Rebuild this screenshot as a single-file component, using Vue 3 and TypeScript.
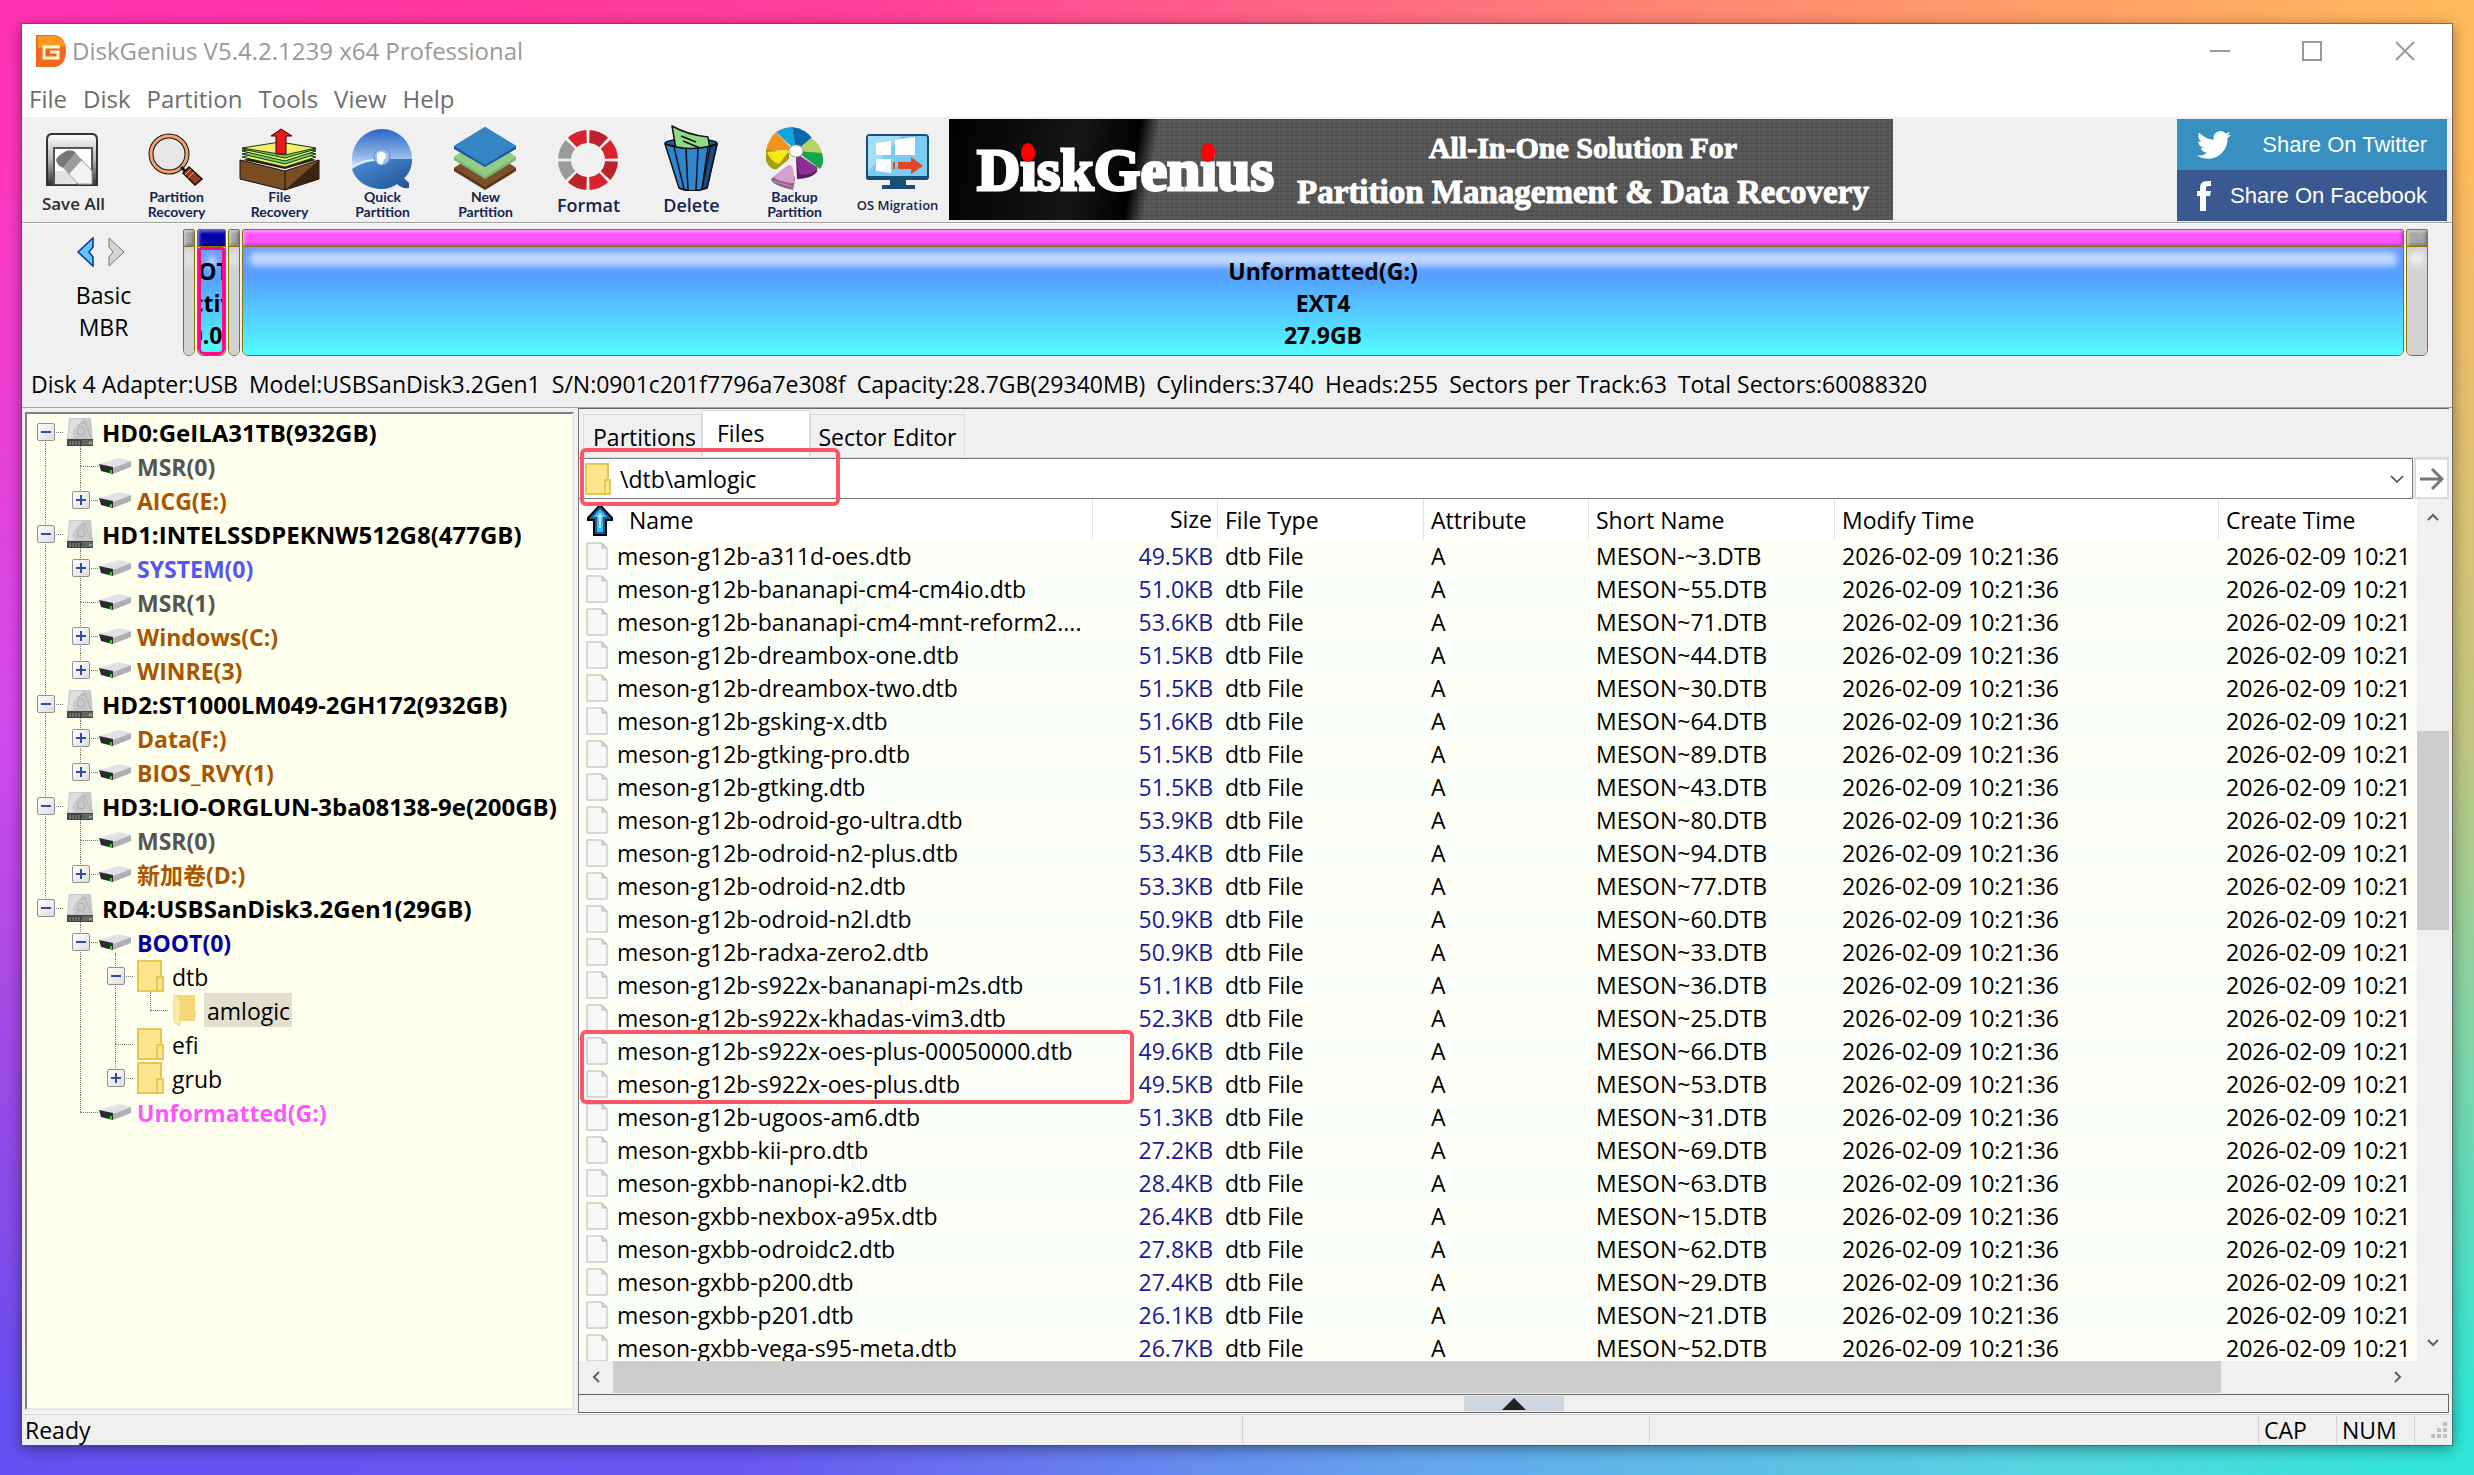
<script setup lang="ts">
import { ref } from 'vue'

type TreeRow = {
  label: string
  kind: 'disk' | 'volume' | 'folder' | 'open'
  tone: string
  /** one entry per guide column: u = line up, d = line down, a = line across, + / - = expander */
  guides: string[]
}

const menus = ['File', 'Disk', 'Partition', 'Tools', 'View', 'Help']

const info = [
  'Disk 4 Adapter:USB',
  'Model:USBSanDisk3.2Gen1',
  'S/N:0901c201f7796a7e308f',
  'Capacity:28.7GB(29340MB)',
  'Cylinders:3740',
  'Heads:255',
  'Sectors per Track:63',
  'Total Sectors:60088320',
]

const tree: TreeRow[] = [
  { label: 'HD0:GeILA31TB(932GB)', kind: 'disk', tone: 'black', guides: ['da-'] },
  { label: 'MSR(0)', kind: 'volume', tone: 'gray', guides: ['ud', 'uda'] },
  { label: 'AICG(E:)', kind: 'volume', tone: 'brown', guides: ['ud', 'ua+'] },
  { label: 'HD1:INTELSSDPEKNW512G8(477GB)', kind: 'disk', tone: 'black', guides: ['uda-'] },
  { label: 'SYSTEM(0)', kind: 'volume', tone: 'blue', guides: ['ud', 'uda+'] },
  { label: 'MSR(1)', kind: 'volume', tone: 'gray', guides: ['ud', 'uda'] },
  { label: 'Windows(C:)', kind: 'volume', tone: 'brown', guides: ['ud', 'uda+'] },
  { label: 'WINRE(3)', kind: 'volume', tone: 'brown', guides: ['ud', 'ua+'] },
  { label: 'HD2:ST1000LM049-2GH172(932GB)', kind: 'disk', tone: 'black', guides: ['uda-'] },
  { label: 'Data(F:)', kind: 'volume', tone: 'brown', guides: ['ud', 'uda+'] },
  { label: 'BIOS_RVY(1)', kind: 'volume', tone: 'brown', guides: ['ud', 'ua+'] },
  { label: 'HD3:LIO-ORGLUN-3ba08138-9e(200GB)', kind: 'disk', tone: 'black', guides: ['uda-'] },
  { label: 'MSR(0)', kind: 'volume', tone: 'gray', guides: ['ud', 'uda'] },
  { label: '新加卷(D:)', kind: 'volume', tone: 'brown', guides: ['ud', 'ua+'] },
  { label: 'RD4:USBSanDisk3.2Gen1(29GB)', kind: 'disk', tone: 'black', guides: ['ua-'] },
  { label: 'BOOT(0)', kind: 'volume', tone: 'navy', guides: ['', 'uda-'] },
  { label: 'dtb', kind: 'folder', tone: 'plain', guides: ['', 'ud', 'uda-'] },
  { label: 'amlogic', kind: 'open', tone: 'plain selected', guides: ['', 'ud', 'ud', 'ua'] },
  { label: 'efi', kind: 'folder', tone: 'plain', guides: ['', 'ud', 'uda'] },
  { label: 'grub', kind: 'folder', tone: 'plain', guides: ['', 'ud', 'ua+'] },
  { label: 'Unformatted(G:)', kind: 'volume', tone: 'pink', guides: ['', 'ua'] },
]

const files: [string, string, string][] = [
  ['meson-g12b-a311d-oes.dtb', '49.5KB', 'MESON-~3.DTB'],
  ['meson-g12b-bananapi-cm4-cm4io.dtb', '51.0KB', 'MESON~55.DTB'],
  ['meson-g12b-bananapi-cm4-mnt-reform2....', '53.6KB', 'MESON~71.DTB'],
  ['meson-g12b-dreambox-one.dtb', '51.5KB', 'MESON~44.DTB'],
  ['meson-g12b-dreambox-two.dtb', '51.5KB', 'MESON~30.DTB'],
  ['meson-g12b-gsking-x.dtb', '51.6KB', 'MESON~64.DTB'],
  ['meson-g12b-gtking-pro.dtb', '51.5KB', 'MESON~89.DTB'],
  ['meson-g12b-gtking.dtb', '51.5KB', 'MESON~43.DTB'],
  ['meson-g12b-odroid-go-ultra.dtb', '53.9KB', 'MESON~80.DTB'],
  ['meson-g12b-odroid-n2-plus.dtb', '53.4KB', 'MESON~94.DTB'],
  ['meson-g12b-odroid-n2.dtb', '53.3KB', 'MESON~77.DTB'],
  ['meson-g12b-odroid-n2l.dtb', '50.9KB', 'MESON~60.DTB'],
  ['meson-g12b-radxa-zero2.dtb', '50.9KB', 'MESON~33.DTB'],
  ['meson-g12b-s922x-bananapi-m2s.dtb', '51.1KB', 'MESON~36.DTB'],
  ['meson-g12b-s922x-khadas-vim3.dtb', '52.3KB', 'MESON~25.DTB'],
  ['meson-g12b-s922x-oes-plus-00050000.dtb', '49.6KB', 'MESON~66.DTB'],
  ['meson-g12b-s922x-oes-plus.dtb', '49.5KB', 'MESON~53.DTB'],
  ['meson-g12b-ugoos-am6.dtb', '51.3KB', 'MESON~31.DTB'],
  ['meson-gxbb-kii-pro.dtb', '27.2KB', 'MESON~69.DTB'],
  ['meson-gxbb-nanopi-k2.dtb', '28.4KB', 'MESON~63.DTB'],
  ['meson-gxbb-nexbox-a95x.dtb', '26.4KB', 'MESON~15.DTB'],
  ['meson-gxbb-odroidc2.dtb', '27.8KB', 'MESON~62.DTB'],
  ['meson-gxbb-p200.dtb', '27.4KB', 'MESON~29.DTB'],
  ['meson-gxbb-p201.dtb', '26.1KB', 'MESON~21.DTB'],
  ['meson-gxbb-vega-s95-meta.dtb', '26.7KB', 'MESON~52.DTB'],
]

const path = ref('\\dtb\\amlogic')

/** Ring segments of the Format icon, in degrees clockwise from the top. */
const ring = [0, 1, 2, 3, 4, 5, 6, 7].map((i) => {
  const point = (r: number, deg: number) => {
    const a = (deg * Math.PI) / 180
    return `${(51 + r * Math.sin(a)).toFixed(1)} ${(41 - r * Math.cos(a)).toFixed(1)}`
  }
  const from = i * 45 + 3
  const to = i * 45 + 42
  return {
    fill: i === 5 || i === 6 ? '#9b9b9b' : i % 2 ? '#d9202d' : '#bb2229',
    d: `M${point(30, from)}A30 30 0 0 1 ${point(30, to)}L${point(17, to - 1)}A17 17 0 0 0 ${point(17, from + 1)}Z`,
  }
})
</script>

<template>
  <div class="desktop">
    <main class="window">
      <header class="titlebar">
        <svg class="logo" viewBox="0 0 30 32" aria-hidden="true">
          <path d="M0 0H17C26 0 30 7 30 16S26 32 17 32H0Z" fill="#f4671f" />
          <path d="M2 1H17C24 1 28 5 29 11L2 13Z" fill="#fa9a1e" />
          <path d="M24 12H8V23H22V17H14" fill="none" stroke="#fff6cf" stroke-width="3" />
        </svg>
        <h1>DiskGenius V5.4.2.1239 x64 Professional</h1>
        <div class="controls">
          <button type="button" aria-label="Minimize"><svg viewBox="0 0 20 20"><path d="M0 10H20" /></svg></button>
          <button type="button" aria-label="Maximize"><svg viewBox="0 0 20 20"><path d="M1 1H19V19H1Z" /></svg></button>
          <button type="button" aria-label="Close"><svg viewBox="0 0 20 20"><path d="M1 1L19 19M19 1L1 19" /></svg></button>
        </div>
      </header>

      <nav class="menu">
        <button v-for="m in menus" :key="m" type="button">{{ m }}</button>
      </nav>

      <section class="toolbar">
        <button type="button" class="tool tool-save">
          <svg viewBox="0 0 103 72" aria-hidden="true">
            <defs>
              <linearGradient id="save" x1="0" y1="0" x2="0" y2="1">
                <stop offset="0" stop-color="#fff" /><stop offset=".5" stop-color="#b5b5b5" /><stop offset="1" stop-color="#333" />
              </linearGradient>
            </defs>
            <path d="M30 15H70Q75 15 75 21V66H25V21Q25 15 30 15Z" fill="url(#save)" stroke="#333" stroke-width="2" />
            <rect x="32" y="29" width="38" height="36" fill="#fff" stroke="#555" stroke-width="2" />
            <path d="M33 52L44 52L55 65H33Z" fill="#e2e2e2" />
            <path d="M46 54L59 40L70 52V65H56Z" fill="#f3f3f3" stroke="#999" />
            <path d="M34 41Q34 38 44 32Q51 30 54 34L41 49Q35 46 34 41Z" fill="#777" />
            <path d="M41 49L54 34L60 41L47 55Z" fill="#9c9c9c" />
          </svg>
          <span>Save All</span>
        </button>
        <button type="button" class="tool tool-two">
          <svg viewBox="0 0 103 72" aria-hidden="true">
            <circle cx="44" cy="35" r="18" fill="#e6e6e6" stroke="#111" stroke-width="5" />
            <circle cx="44" cy="35" r="18" fill="none" stroke="#f4a070" stroke-width="3" />
            <path d="M56 48L60 52" stroke="#111" stroke-width="3" />
            <path d="M58 54L64 48L77 60L70 66Z" fill="#963c22" stroke="#111" stroke-width="1.5" />
            <path d="M60 56L66 50M63 59L69 53" stroke="#f09a6a" />
          </svg>
          <span>Partition<br />Recovery</span>
        </button>
        <button type="button" class="tool tool-two">
          <svg viewBox="0 0 103 72" aria-hidden="true">
            <path d="M12 41L57 52L91 41V60L57 71L12 60Z" fill="#7a4d24" stroke="#111" />
            <path d="M91 41V60L57 71Z" fill="#3a2412" />
            <path d="M57 52V71" stroke="#111" />
            <path d="M15 41L52 31L88 41L57 50Z" fill="#2c1a0c" />
            <g stroke="#1c3a10">
              <path d="M14 38L52 29L88 38L57 48Z" fill="#f2ee6b" />
              <path d="M14 35L52 27L88 35L57 45Z" fill="#6fd36b" />
              <path d="M14 32L52 25L88 32L57 42Z" fill="#f2ee6b" />
              <path d="M14 30L52 24L88 30L57 39Z" fill="#6fd36b" />
              <path d="M14 29L52 23L88 29L57 36Z" fill="#f2ee6b" />
            </g>
            <path d="M53 10L64 17H58V35H48V17H43Z" fill="#e51a1a" stroke="#400" />
          </svg>
          <span>File<br />Recovery</span>
        </button>
        <button type="button" class="tool tool-two">
          <svg viewBox="0 0 103 72" aria-hidden="true">
            <defs>
              <linearGradient id="disc" x1="0" y1="0" x2="0" y2="1">
                <stop offset="0" stop-color="#2b66c4" /><stop offset=".45" stop-color="#8fb6e8" /><stop offset=".62" stop-color="#cfe2f8" />
              </linearGradient>
              <linearGradient id="disclow" x1="0" y1="0" x2="1" y2="1">
                <stop offset="0" stop-color="#4a90dc" /><stop offset="1" stop-color="#20528f" />
              </linearGradient>
            </defs>
            <circle cx="51" cy="40" r="30" fill="url(#disc)" />
            <path d="M21 50Q34 41 51 40H81C81 49 78 55 73 59L78 64V69Q71 70 66 65Q59 70 51 70C36 70 24 61 21 50Z" fill="url(#disclow)" />
            <path d="M21 48Q34 41 44 41" fill="none" stroke="#dcebfb" stroke-width="2" />
            <circle cx="51" cy="38" r="8" fill="#9cc0ec" stroke="#5d8fd0" />
            <path d="M46 36Q47 32 51 33Q55 33 55 39Q52 40 52 45Q47 47 46 41Z" fill="#fff" />
          </svg>
          <span>Quick<br />Partition</span>
        </button>
        <button type="button" class="tool tool-two">
          <svg viewBox="0 0 103 72" aria-hidden="true">
            <path d="M20 49L51 29L82 49V52L51 71L20 52Z" fill="#57351a" />
            <path d="M20 49L51 29L82 49L51 68Z" fill="#7a4f2a" />
            <path d="M20 38L51 18L82 38V41L51 60L20 41Z" fill="#7bb877" />
            <path d="M20 38L51 18L82 38L51 57Z" fill="#92cd86" />
            <path d="M20 27L51 8L82 27V30L51 48L20 30Z" fill="#1c56a8" />
            <path d="M20 27L51 8L82 27L51 46Z" fill="#3585c2" />
          </svg>
          <span>New<br />Partition</span>
        </button>
        <button type="button" class="tool">
          <svg viewBox="0 0 103 72" aria-hidden="true">
            <path v-for="s in ring" :key="s.d" :d="s.d" :fill="s.fill" />
          </svg>
          <span>Format</span>
        </button>
        <button type="button" class="tool">
          <svg viewBox="0 0 103 72" aria-hidden="true" stroke="#111" stroke-width="1.5" stroke-linejoin="round">
            <ellipse cx="51" cy="24" rx="26" ry="4" fill="#1c5ca8" />
            <path d="M32 7Q48 16 68 18L70 30H36Z" fill="#8edb8a" />
            <path d="M41 17L56 23M43 22L60 29" />
            <path d="M25 25Q51 34 77 25L67 69Q51 75 39 69Z" fill="#2f86cf" />
            <path d="M34 28L44 70M46 30L48 71M58 30L56 71M68 28L62 70" fill="none" />
            <path d="M70 28L77 25L67 69L62 70Z" fill="#174b88" />
          </svg>
          <span>Delete</span>
        </button>
        <button type="button" class="tool tool-two">
          <svg viewBox="0 0 103 72" aria-hidden="true">
            <path d="M53 32L33 13A29 24 0 0 1 49 8Z" fill="#12a5dc" />
            <path d="M53 32L49 8A29 25 0 0 1 69 19Z" fill="#0a67ae" />
            <path d="M53 32L68 19Q78 25 79 35Z" fill="#b5d464" />
            <path d="M53 32L79 34Q82 44 77 50Z" fill="#14a64c" />
            <path d="M53 38L74 48V53Q68 60 54 60Z" fill="#5d1a6c" />
            <path d="M53 34L75 49Q68 58 56 55Z" fill="#8b3090" />
            <path d="M23 32Q25 20 33 13L50 31Z" fill="#f0931f" />
            <path d="M23 30V42Q28 52 34 50L46 40V34Z" fill="#a39a1a" />
            <path d="M24 33L47 31L36 45Q28 43 24 33Z" fill="#f6ea0c" />
            <path d="M42 49L28 60Q28 66 50 71L52 61V58Z" fill="#93628c" />
            <path d="M44 47Q48 44 50 49L52 64Q39 64 30 58Z" fill="#d3a0cb" />
            <path d="M29 62L51 68" stroke="#c490bc" />
            <ellipse cx="53" cy="32" rx="7" ry="6" fill="#fff" stroke="#999" />
          </svg>
          <span>Backup<br />Partition</span>
        </button>
        <button type="button" class="tool tool-os">
          <svg viewBox="0 0 103 72" aria-hidden="true">
            <path d="M44 60H60V66H69V70H36V66H44Z" fill="#164f78" />
            <rect x="21" y="16" width="61" height="44" rx="3" fill="#7bccf0" stroke="#164f78" stroke-width="2" />
            <path d="M20 57H83V59Q82 61 80 61H23Q20 61 20 58Z" fill="#164f78" />
            <path d="M22 17H56L22 52Z" fill="#a3ddf6" />
            <path d="M30 24L45 22V36H30ZM49 21L69 18V36H49ZM30 40H45V54L30 52Z" fill="#fff" />
            <path d="M47 43H49V50H47ZM52 43H65V38L77 47L65 55V50H52Z" fill="#df4726" />
          </svg>
          <span>OS Migration</span>
        </button>

        <div class="banner">
          <div class="banner-logo">D<i>i</i>skGen<i>i</i>us</div>
          <div class="banner-text">
            <p class="banner-top">All-In-One Solution For</p>
            <p class="banner-bottom">Partition Management &amp; Data Recovery</p>
          </div>
        </div>

        <div class="share">
          <a href="#twitter" class="twitter">
            <svg viewBox="0 0 24 24" width="34" height="34" aria-hidden="true">
              <path fill="#fff" d="M23.953 4.57a10 10 0 01-2.825.775 4.958 4.958 0 002.163-2.723c-.951.555-2.005.959-3.127 1.184a4.92 4.92 0 00-8.384 4.482C7.69 8.095 4.067 6.13 1.64 3.162a4.822 4.822 0 00-.666 2.475c0 1.71.87 3.213 2.188 4.096a4.904 4.904 0 01-2.228-.616v.06a4.923 4.923 0 003.946 4.827 4.996 4.996 0 01-2.212.085 4.936 4.936 0 004.604 3.417 9.867 9.867 0 01-6.102 2.105c-.39 0-.779-.023-1.17-.067a13.995 13.995 0 007.557 2.209c9.053 0 13.998-7.496 13.998-13.985 0-.21 0-.42-.015-.63A9.935 9.935 0 0024 4.59z" />
            </svg>
            <span>Share On Twitter</span>
          </a>
          <a href="#facebook" class="facebook">
            <svg viewBox="0 0 14 30" width="14" height="30" aria-hidden="true">
              <path fill="#fff" d="M3 30V15H0V10H3V7Q3 0 10 0H14V5H11Q9 5 9 7V10H14L13 15H9V30Z" />
            </svg>
            <span>Share On Facebook</span>
          </a>
        </div>
      </section>

      <section class="diskmap">
        <div class="diskmap-row">
          <div class="disknav">
            <div class="arrows">
              <button type="button" aria-label="Previous disk">
                <svg viewBox="0 0 18 30"><path d="M16 1V10L12 15L16 20V29L1 15Z" fill="#62c4fb" stroke="#0a2f9a" stroke-width="1.5" /></svg>
              </button>
              <button type="button" aria-label="Next disk">
                <svg viewBox="0 0 18 30"><path d="M2 1V10L6 15L2 20V29L17 15Z" fill="#d4d4d4" stroke="#777" /></svg>
              </button>
            </div>
            <p>Basic</p>
            <p>MBR</p>
          </div>
          <div class="bars">
            <div class="bar free thin"><div class="cap"></div><div class="body"></div></div>
            <div class="bar boot">
              <div class="cap"></div>
              <div class="body"><p>BOOT(0)</p><p>Active</p><p>500.0MB</p></div>
            </div>
            <div class="bar free thin"><div class="cap"></div><div class="body"></div></div>
            <div class="bar main">
              <div class="cap"></div>
              <div class="body"><p>Unformatted(G:)</p><p>EXT4</p><p>27.9GB</p></div>
            </div>
            <div class="bar free tail"><div class="cap"></div><div class="body"></div></div>
          </div>
        </div>
        <div class="info"><span v-for="i in info" :key="i">{{ i }}</span></div>
      </section>

      <section class="work">
        <ul class="tree" role="tree">
          <li v-for="(row, n) in tree" :key="n" role="treeitem">
            <span v-for="(g, c) in row.guides" :key="c" class="guide">
              <i v-if="g.includes('u')" class="up"></i>
              <i v-if="g.includes('d')" class="down"></i>
              <i v-if="g.includes('a')" class="across"></i>
              <button v-if="g.includes('-') || g.includes('+')" type="button" class="expander" aria-label="Toggle">
                <svg viewBox="0 0 14 14"><path :d="g.includes('+') ? 'M2 7H12M7 2V12' : 'M2 7H12'" /></svg>
              </button>
            </span>
            <span class="node-icon">
              <i v-if="row.guides.length === 1 || row.label === 'BOOT(0)' || row.label === 'dtb'" class="stem"></i>
              <svg v-if="row.kind === 'disk'" viewBox="0 0 26 28" width="26" height="28">
                <path d="M2 0H24L26 21H0Z" fill="#c9c9c9" />
                <path d="M3 1H15L6 20H1Z" fill="#dedede" />
                <circle cx="14" cy="13" r="4" fill="none" stroke="#aaa" />
                <path d="M6 17Q9 4 20 4M17 3L24 19" fill="none" stroke="#b0b0b0" />
                <path d="M0 21H26V28H0Z" fill="#454545" />
                <path d="M3 23V27M6 23V27M9 23V27M12 23V27" stroke="#999" />
                <path d="M15 22H26V27H15Z" fill="#666" />
                <path d="M22 25H25" stroke="#4bd04b" stroke-width="2" />
              </svg>
              <svg v-else-if="row.kind === 'volume'" viewBox="0 0 32 16" width="32" height="16">
                <path d="M0 6L20 0L32 3L14 10Z" fill="#e1e2e6" />
                <path d="M14 10L32 3V9L14 16Z" fill="#aeb0b4" />
                <path d="M0 6L14 9V16L2 13Z" fill="#2a2c2a" />
                <path d="M12 12V15" stroke="#35d43a" stroke-width="2" />
              </svg>
              <svg v-else-if="row.kind === 'folder'" viewBox="0 0 27 32" width="27" height="32">
                <path d="M1 1H24V31H1Z" fill="#ffe48f" stroke="#e9c552" stroke-width="2" />
                <path d="M20 17H26V31H20Z" fill="#ffe48f" stroke="#e9c552" stroke-width="2" />
              </svg>
              <svg v-else viewBox="0 0 24 32" width="24" height="32">
                <path d="M3 1H22V16L23 18L22 27H3Z" fill="#f7d67a" />
                <path d="M1 1L7 6V32L1 28Z" fill="#ffebad" stroke="#f0d180" />
              </svg>
            </span>
            <span class="node-label" :class="row.tone">{{ row.label }}</span>
          </li>
        </ul>

        <section class="pane">
          <div class="tabs" role="tablist">
            <button type="button" role="tab" class="tab">Partitions</button>
            <button type="button" role="tab" class="tab active">Files</button>
            <button type="button" role="tab" class="tab sector">Sector Editor</button>
          </div>

          <div class="address">
            <div class="combo">
              <svg viewBox="0 0 27 32" width="27" height="32" aria-hidden="true">
                <path d="M1 1H23V31H1Z" fill="#ffe48f" stroke="#e9c552" stroke-width="2" />
                <path d="M20 17H25V31H20Z" fill="#ffe48f" stroke="#e9c552" stroke-width="2" />
              </svg>
              <input v-model="path" type="text" aria-label="Path" />
              <button type="button" aria-label="Show folders">
                <svg viewBox="0 0 14 8" width="14" height="8"><path d="M1 1L7 7L13 1" fill="none" stroke="#444" stroke-width="1.5" /></svg>
              </button>
            </div>
            <button type="button" class="go" aria-label="Go">
              <svg viewBox="0 0 24 22" width="24" height="22"><path d="M0 11H22M12 1L22 11L12 21" fill="none" stroke="#777" stroke-width="3" /></svg>
            </button>
            <i class="mark mark-path"></i>
          </div>

          <div class="list">
            <div class="grid">
              <table>
                <colgroup>
                  <col class="c-name" /><col class="c-size" /><col class="c-type" /><col class="c-attr" />
                  <col class="c-short" /><col class="c-mod" /><col />
                </colgroup>
                <thead>
                  <tr>
                    <th class="name">
                      <span class="cell">
                        <svg viewBox="0 0 28 32" width="28" height="32" aria-hidden="true">
                          <path d="M14 1L26 14V16H20V31H8V16H2V14Z" fill="#0f5f98" stroke="#000" stroke-width="2" />
                          <path d="M14 5L21 13H17V28H11V13H7Z" fill="#3fb4f0" />
                          <path d="M14 9L17 13H15V24H13V13H11Z" fill="#b8f0ff" />
                        </svg>
                        Name
                      </span>
                    </th>
                    <th class="size">Size</th><th>File Type</th><th>Attribute</th><th>Short Name</th><th>Modify Time</th><th>Create Time</th>
                  </tr>
                </thead>
                <tbody>
                  <tr v-for="f in files" :key="f[0]">
                    <td class="name">
                      <span class="cell">
                        <svg viewBox="0 0 22 28" width="22" height="28" aria-hidden="true">
                          <path d="M1 1H16L21 6V27H1Z" fill="#f8f8f8" stroke="#b4b4b4" />
                          <path d="M16 1V6H21Z" fill="#ddd" stroke="#b4b4b4" />
                        </svg>
                        {{ f[0] }}
                      </span>
                    </td>
                    <td class="size">{{ f[1] }}</td>
                    <td>dtb File</td>
                    <td>A</td>
                    <td>{{ f[2] }}</td>
                    <td>2026-02-09 10:21:36</td>
                    <td>2026-02-09 10:21</td>
                  </tr>
                </tbody>
              </table>
              <i class="mark mark-rows"></i>
            </div>
            <div class="vscroll">
              <svg viewBox="0 0 12 8" width="12" height="8"><path d="M1 7L6 2L11 7" /></svg>
              <div class="vtrack"><i></i></div>
              <svg viewBox="0 0 12 8" width="12" height="8"><path d="M1 1L6 6L11 1" /></svg>
            </div>
          </div>

          <div class="hscroll">
            <svg viewBox="0 0 8 12" width="8" height="12"><path d="M7 1L2 6L7 11" /></svg>
            <div class="htrack"></div>
            <svg viewBox="0 0 8 12" width="8" height="12"><path d="M1 1L6 6L1 11" /></svg>
          </div>

          <div class="splitter">
            <button type="button" aria-label="Expand panel">
              <svg viewBox="0 0 24 12" width="24" height="12"><path d="M0 12L12 0L24 12Z" fill="#222" /></svg>
            </button>
          </div>
        </section>
      </section>

      <footer class="status">
        <span class="ready">Ready</span>
        <span class="blank"></span>
        <span class="fill"></span>
        <span class="key">CAP</span>
        <span class="key">NUM</span>
        <svg viewBox="0 0 17 17" width="17" height="17" aria-hidden="true">
          <path d="M12 0H16V4H12ZM6 6H10V10H6ZM12 6H16V10H12ZM0 12H4V16H0ZM6 12H10V16H6ZM12 12H16V16H12Z" fill="#bfbfbf" />
        </svg>
      </footer>
    </main>
  </div>
</template>

<style>
body {
  margin: 0;
}
</style>

<style scoped>
* {
  box-sizing: border-box;
}

button {
  padding: 0;
  border: 0;
  background: none;
  font: inherit;
  color: inherit;
}

svg {
  display: block;
  flex: none;
}

p,
h1,
ul {
  margin: 0;
  padding: 0;
}

.desktop {
  position: relative;
  display: flex;
  height: 100vh;
  padding: 24px 22px 30px;
  background:
    radial-gradient(ellipse 30% 60% at 0 50%, #ff48ea 0, rgba(255, 72, 234, 0) 100%),
    linear-gradient(90deg, #ff2da6 0%, #ff3f9a 35%, #ff8a70 70%, #ffba5c 100%);
  font-family: 'Open Sans', 'Noto Sans CJK SC', sans-serif;
  font-size: 23px;
  line-height: 32px;
  color: #000;
}

.desktop::before {
  content: '';
  position: absolute;
  inset: 0;
  background: linear-gradient(90deg, #6450f2 0%, #6856f0 30%, #64a8ee 58%, #54d4e0 82%, #2ee6d6 100%);
  mask-image: linear-gradient(180deg, transparent 10%, rgba(0, 0, 0, 0.3) 50%, #000 96%);
}

.window {
  position: relative;
  display: flex;
  flex: 1;
  flex-direction: column;
  min-width: 0;
  background: #f0f0f0;
  box-shadow: 0 0 0 1px rgba(80, 70, 90, 0.6), 0 3px 14px rgba(0, 0, 0, 0.45);
}

.titlebar {
  display: flex;
  align-items: center;
  height: 60px;
  padding: 0 16px 6px 14px;
  background: #fff;
}

.logo {
  width: 30px;
  height: 32px;
}

h1 {
  flex: 1;
  padding-left: 6px;
  font-size: 24px;
  font-weight: 400;
  color: #999;
}

.controls {
  display: flex;
}

.controls button {
  display: flex;
  align-items: center;
  justify-content: center;
  width: 92px;
  height: 40px;
}

.controls button:last-child {
  width: 62px;
  margin-left: 16px;
}

.controls svg {
  width: 20px;
  height: 20px;
  fill: none;
  stroke: #999;
  stroke-width: 2;
}

.menu {
  display: flex;
  gap: 16px;
  height: 33px;
  padding-left: 7px;
  background: #fff;
  font-size: 24px;
  color: #6d6d6d;
}

.menu button {
  height: 30px;
  line-height: 30px;
}

.toolbar {
  display: flex;
  height: 107px;
  padding-top: 2px;
  border-bottom: 1px solid #fff;
  box-shadow: inset 0 -1px #a0a0a0;
}

.tool {
  display: flex;
  flex-direction: column;
  align-items: center;
  width: 103px;
  height: 103px;
  font-size: 18px;
  font-weight: 600;
  line-height: 28px;
  color: #14244f;
}

.tool svg {
  width: 103px;
  height: 72px;
}

.tool-save {
  font-size: 17px;
  line-height: 26px;
  color: #2b2b2b;
}

.tool-two {
  font-family: Lato, sans-serif;
  font-size: 14px;
  font-weight: 700;
  line-height: 15px;
}

.tool-two svg {
  margin-bottom: -2px;
}

.tool-os {
  font-size: 13px;
}

.banner {
  display: flex;
  align-items: center;
  width: 944px;
  height: 101px;
  padding-left: 28px;
  background:
    linear-gradient(100deg, #000 0, rgba(0, 0, 0, 0.75) 14%, #000 20%, transparent 22%),
    repeating-linear-gradient(90deg, rgba(255, 255, 255, 0.05) 0 1px, transparent 1px 5px),
    repeating-linear-gradient(0deg, rgba(0, 0, 0, 0.1) 0 1px, transparent 1px 4px),
    #565656;
  font-family: 'Liberation Serif', serif;
  font-weight: 700;
  color: #fff;
}

.banner-logo {
  width: 318px;
  font-size: 60px;
  line-height: 70px;
  -webkit-text-stroke: 3px #fff;
}

.banner-logo i {
  position: relative;
  font-style: normal;
}

.banner-logo i::before {
  content: '';
  position: absolute;
  top: 6px;
  left: 1px;
  width: 14px;
  height: 19px;
  border-radius: 50%;
  background: #f00;
}

.banner-text {
  flex: 1;
  padding-right: 22px;
  text-align: center;
  -webkit-text-stroke: 1px #fff;
}

.banner-text p {
  line-height: 45px;
}

.banner-top {
  font-size: 30px;
}

.banner-bottom {
  font-size: 33px;
  white-space: nowrap;
}

.share {
  width: 270px;
  margin-left: auto;
  margin-right: 5px;
  font-family: 'Liberation Sans', sans-serif;
  font-size: 22px;
}

.share a {
  display: flex;
  align-items: center;
  justify-content: space-between;
  height: 51px;
  padding: 0 20px;
  color: #fff;
  text-decoration: none;
}

.twitter {
  background: #3790bf;
}

.facebook {
  background: #3b5991;
}

.diskmap {
  height: 184px;
  padding-top: 5px;
  border-bottom: 1px solid #a0a0a0;
}

.diskmap-row {
  display: flex;
  height: 127px;
}

.disknav {
  width: 161px;
  text-align: center;
}

.disknav p {
  padding-left: 2px;
  line-height: 32px;
}

.arrows {
  display: flex;
  align-items: flex-start;
  justify-content: center;
  gap: 12px;
  height: 50px;
  padding: 8px 4px 0 0;
}

.arrows svg {
  width: 18px;
  height: 30px;
}

.bars {
  display: flex;
  flex: 1;
  gap: 2px;
  min-width: 0;
  margin-right: 24px;
}

.bar {
  display: flex;
  flex: none;
  flex-direction: column;
  overflow: hidden;
  border: 1px solid #8b7300;
  border-radius: 2px 2px 6px 6px;
  font-weight: 700;
}

.thin {
  width: 12px;
}

.tail {
  width: 22px;
}

.boot {
  width: 29px;
}

.main {
  flex: 1;
}

.cap {
  height: 17px;
  border-bottom: 1px solid #8b7300;
  background: #a6a6a6;
  box-shadow: inset 2px 2px 3px rgba(255, 255, 255, 0.4), inset -2px -2px 3px rgba(0, 0, 0, 0.25);
}

.boot .cap {
  background: #00a;
}

.main .cap {
  background: #ff55ff;
}

.body {
  position: relative;
  display: flex;
  flex: 1;
  flex-direction: column;
  align-items: center;
  padding-top: 8px;
  background: linear-gradient(180deg, #6b9cff 0, #55a0ff 28%, #52f7ff 95%);
  white-space: nowrap;
}

.body::before {
  content: '';
  position: absolute;
  top: 5px;
  left: 6px;
  right: 6px;
  height: 14px;
  border-radius: 6px;
  background: rgba(255, 255, 255, 0.6);
  filter: blur(3px);
}

.free .body {
  background: #d3d3d3;
}

.free .body::before {
  left: 2px;
  right: 2px;
}

.boot .body {
  border: 3px solid #ff0a80;
  border-radius: 3px 3px 6px 6px;
  padding-top: 5px;
  overflow: hidden;
}

.body p {
  position: relative;
}

.info {
  display: flex;
  gap: 11px;
  align-items: center;
  height: 51px;
  padding: 4px 0 0 9px;
  white-space: nowrap;
}

.work {
  display: flex;
  flex: 1;
  min-height: 0;
  padding-right: 3px;
  border-bottom: 1px solid #fff;
}

.tree {
  width: 549px;
  margin: 4px 4px 3px 3px;
  padding: 1px 0 0 1px;
  border: 2px solid;
  border-color: #808080 #e8e8e8 #e8e8e8 #808080;
  background: #ffffee;
  list-style: none;
  font-weight: 700;
}

.tree li {
  display: flex;
  align-items: center;
  height: 34px;
}

.guide {
  position: relative;
  display: flex;
  align-items: center;
  justify-content: center;
  width: 35px;
  height: 34px;
}

.guide i {
  position: absolute;
}

.up,
.down {
  left: 17px;
  height: 17px;
  border-left: 1px dotted #777;
}

.up {
  top: 0;
}

.down {
  bottom: 0;
}

.across {
  top: 17px;
  left: 17px;
  right: 0;
  border-top: 1px dotted #777;
}

.expander {
  position: relative;
  display: flex;
  align-items: center;
  justify-content: center;
  width: 18px;
  height: 18px;
  border: 1px solid #919191;
  border-radius: 2px;
  background: linear-gradient(135deg, #fff, #ddd);
}

.expander svg {
  width: 14px;
  height: 14px;
  fill: none;
  stroke: #2f4d9c;
  stroke-width: 2;
}

.node-icon {
  position: relative;
  display: flex;
  align-items: center;
  justify-content: center;
  width: 34px;
  height: 34px;
}

.node-icon svg {
  position: relative;
}

.stem {
  position: absolute;
  bottom: 0;
  left: 17px;
  height: 6px;
  border-left: 1px dotted #777;
}

.node-label {
  padding: 2px 2px 0 3px;
  margin-left: 2px;
  line-height: 32px;
  white-space: nowrap;
}

.black {
  font-size: 24px;
}

.gray {
  color: #555;
}

.brown {
  color: #aa5500;
}

.blue {
  color: #5555ff;
}

.navy {
  color: #0000aa;
}

.pink {
  color: #ff55ff;
}

.plain {
  font-weight: 400;
}

.selected {
  background: #e2dfcf;
}

.pane {
  display: flex;
  flex: 1;
  flex-direction: column;
  min-width: 0;
  border-top: 1px solid #666;
  border-left: 1px solid #777;
}

.tabs {
  display: flex;
  align-items: flex-end;
  height: 49px;
  padding: 0 2px 0 4px;
  border-bottom: 1px solid #dcdcdc;
}

.tab {
  width: 119px;
  height: 43px;
  padding: 2px 0 0 4px;
  border: 1px solid #dcdcdc;
  border-bottom: 0;
}

.tab.active {
  width: 108px;
  height: 47px;
  padding: 0 0 2px 14px;
  background: #fff;
  text-align: left;
}

.tab.sector {
  width: 155px;
  padding-left: 0;
}

.address {
  position: relative;
  display: flex;
  height: 41px;
}

.combo {
  display: flex;
  flex: 1;
  align-items: center;
  padding-left: 6px;
  border: 1px solid #7a7a7a;
  border-left: 0;
  background: #fff;
}

.combo input {
  flex: 1;
  min-width: 0;
  height: 36px;
  padding: 1px 0 0 8px;
  border: 0;
  outline: 0;
  background: none;
  font: inherit;
  color: inherit;
}

.combo button {
  padding: 12px 8px;
}

.go {
  display: flex;
  align-items: center;
  justify-content: center;
  width: 35px;
  margin-left: 1px;
  border: 2px solid #dcdcdc;
  background: #fff;
}

.mark {
  position: absolute;
  z-index: 2;
  border: 4px solid #ff5566;
  border-radius: 6px;
  pointer-events: none;
}

.mark-path {
  top: -10px;
  left: 1px;
  width: 260px;
  height: 58px;
}

.mark-rows {
  top: 531px;
  left: 1px;
  width: 554px;
  height: 74px;
}

.list {
  display: flex;
  flex: 1;
  min-height: 0;
}

.grid {
  position: relative;
  flex: 1;
  min-width: 0;
  overflow: hidden;
}

table {
  width: 100%;
  table-layout: fixed;
  border-collapse: separate;
  border-spacing: 0;
}

.c-name {
  width: 514px;
}

.c-size {
  width: 125px;
}

.c-type {
  width: 206px;
}

.c-attr {
  width: 165px;
}

.c-short {
  width: 246px;
}

.c-mod {
  width: 384px;
}

th,
td {
  height: 33px;
  padding: 0 0 0 7px;
  font-weight: 400;
  line-height: 32px;
  text-align: left;
  white-space: nowrap;
}

th {
  height: 40px;
  padding-top: 2px;
  border-right: 1px solid #e5e5e5;
  background: #fff;
}

th:last-child {
  border-right: 0;
}

td {
  background: #fffff5;
}

tr:nth-child(even) td {
  background: #fafffa;
}

.cell {
  display: flex;
  align-items: center;
  gap: 9px;
}

th .cell {
  gap: 15px;
}

.size {
  padding: 0 5px 0 0;
  text-align: right;
}

td.size {
  color: #1a1a96;
}

.vscroll {
  display: flex;
  flex-direction: column;
  align-items: center;
  width: 32px;
  padding: 14px 0;
}

.vtrack {
  flex: 1;
  align-self: stretch;
  padding: 10px 0;
}

.vtrack i {
  display: block;
  height: 25%;
  background: #cdcdcd;
}

.vtrack::before {
  content: '';
  display: block;
  height: 25%;
}

.vscroll path,
.hscroll path {
  fill: none;
  stroke: #606060;
  stroke-width: 2;
}

.hscroll {
  display: flex;
  align-items: center;
  height: 32px;
  padding: 0 47px 0 13px;
}

.htrack {
  flex: 1;
  height: 32px;
  margin: 0 173px 0 13px;
  background: #cdcdcd;
}

.splitter {
  display: flex;
  justify-content: center;
  height: 19px;
  margin-top: 1px;
  padding: 1px 0;
  border: 1px solid #666;
  border-left: 0;
}

.splitter button {
  display: flex;
  align-items: center;
  justify-content: center;
  width: 100px;
  background: #ced6e0;
}

.status {
  display: flex;
  align-items: center;
  height: 31px;
  padding-right: 4px;
  border-top: 1px solid #d4d4d4;
}

.status span {
  height: 28px;
  line-height: 29px;
  border-right: 1px solid #d4d4d4;
}

.ready {
  flex: 3;
  padding-left: 3px;
}

.blank {
  flex: 1;
}

.fill {
  flex: 0 1 609px;
}

.key {
  width: 78px;
  padding-left: 5px;
}

.status svg {
  margin-left: 16px;
}
</style>
